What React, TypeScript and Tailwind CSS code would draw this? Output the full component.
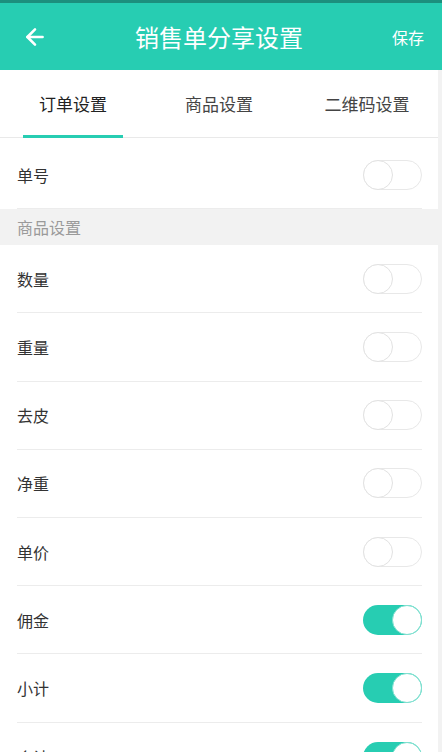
import { ArrowLeft } from "lucide-react";

const font = { fontFamily: '"Noto Sans CJK SC", "Noto Sans", sans-serif' };

function Toggle({ on }: { on: boolean }) {
  return on ? (
    <div className="flex h-[30px] w-[59px] justify-end rounded-full bg-[#27cdb2]">
      <div className="h-[30px] w-[30px] rounded-full border border-[#7fe0d0] bg-white" />
    </div>
  ) : (
    <div className="flex h-[30px] w-[59px] rounded-full border border-[#e8e8e8] bg-white">
      <div className="-m-px h-[30px] w-[30px] rounded-full border border-[#e2e2e2] bg-white" />
    </div>
  );
}

function Row({ label, on = false, last = false }: { label: string; on?: boolean; last?: boolean }) {
  return (
    <div className="pl-[17px] pr-[16px]">
      <div
        className={
          "flex h-[68.2px] items-center justify-between " +
          (last ? "" : "border-b border-[#ececec]")
        }
      >
        <span className="text-[16px] text-[#333]">{label}</span>
        <Toggle on={on} />
      </div>
    </div>
  );
}

const goods: [string, boolean][] = [
  ["数量", false],
  ["重量", false],
  ["去皮", false],
  ["净重", false],
  ["单价", false],
  ["佣金", true],
  ["小计", true],
  ["合计", true],
];

export default function App() {
  return (
    <div className="h-[752px] w-[442px] overflow-hidden bg-[#f2f2f2]" style={font}>
      <div className="h-[3px] bg-[#1c8f7d]" />
      <div className="relative flex h-[67px] items-center bg-[#27cdb2] text-white">
        <ArrowLeft className="ml-[22px] h-[26px] w-[26px]" strokeWidth={2.4} />
        <div className="absolute inset-x-0 pr-[4px] text-center text-[24px]">销售单分享设置</div>
        <span className="ml-auto mr-[18px] text-[16px]">保存</span>
      </div>
      <div className="w-[438px] bg-white">
        <div className="grid h-[68px] grid-cols-3 border-b border-[#e9e9e9] text-[17px]">
          <div className="relative flex items-center justify-center text-[#222]">
            订单设置
            <div className="absolute bottom-[-1px] left-[23px] h-[3px] w-[100px] bg-[#27cdb2]" />
          </div>
          <div className="flex items-center justify-center text-[#444]">商品设置</div>
          <div className="flex items-center justify-center pl-[4px] text-[#444]">二维码设置</div>
        </div>
        <div className="h-[3px]" />
        <Row label="单号" />
      </div>
      <div className="flex h-[36px] w-[438px] items-center bg-[#f2f2f2] px-[17px] text-[16px] text-[#9a9a9a]">
        商品设置
      </div>
      <div className="w-[438px] bg-white">
        {goods.map(([l, on], i) => (
          <Row key={l} label={l} on={on} last={i === goods.length - 1} />
        ))}
      </div>
    </div>
  );
}
